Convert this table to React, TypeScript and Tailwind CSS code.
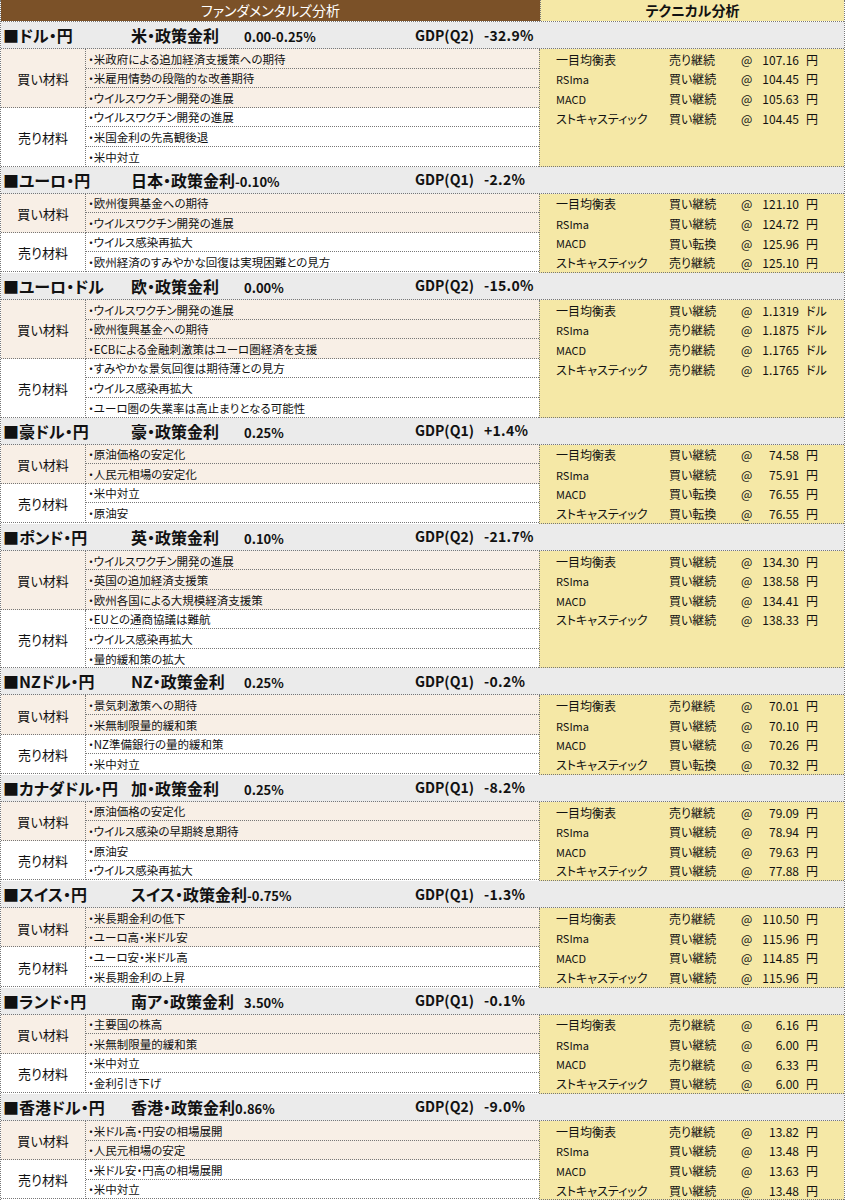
type Tech = { name: string; signal: string; value: string };

type Pair = {
  title: string;
  policy: string;
  rate: string;
  tight?: boolean;
  gdpLabel: string;
  gdp: string;
  buy: string[];
  sell: string[];
  unit: string;
  tech: Tech[];
};

const t = (a: string, b: string, c: string, d: string, sa: string, sb: string, sc: string, sd: string): Tech[] => [
  { name: '一目均衡表', signal: sa, value: a },
  { name: 'RSIma', signal: sb, value: b },
  { name: 'MACD', signal: sc, value: c },
  { name: 'ストキャスティック', signal: sd, value: d },
];

const pairs: Pair[] = [
  {
    title: '■ドル・円',
    policy: '米・政策金利',
    rate: '0.00-0.25%',
    gdpLabel: 'GDP(Q2)',
    gdp: '-32.9%',
    buy: ['・米政府による追加経済支援策への期待', '・米雇用情勢の段階的な改善期待', '・ウイルスワクチン開発の進展'],
    sell: ['・ウイルスワクチン開発の進展', '・米国金利の先高観後退', '・米中対立'],
    unit: '円',
    tech: t('107.16', '104.45', '105.63', '104.45', '売り継続', '買い継続', '買い継続', '買い継続'),
  },
  {
    title: '■ユーロ・円',
    policy: '日本・政策金利',
    rate: '-0.10%',
    tight: true,
    gdpLabel: 'GDP(Q1)',
    gdp: '-2.2%',
    buy: ['・欧州復興基金への期待', '・ウイルスワクチン開発の進展'],
    sell: ['・ウイルス感染再拡大', '・欧州経済のすみやかな回復は実現困難との見方'],
    unit: '円',
    tech: t('121.10', '124.72', '125.96', '125.10', '買い継続', '買い継続', '買い転換', '売り継続'),
  },
  {
    title: '■ユーロ・ドル',
    policy: '欧・政策金利',
    rate: '0.00%',
    gdpLabel: 'GDP(Q2)',
    gdp: '-15.0%',
    buy: ['・ウイルスワクチン開発の進展', '・欧州復興基金への期待', '・ECBによる金融刺激策はユーロ圏経済を支援'],
    sell: ['・すみやかな景気回復は期待薄との見方', '・ウイルス感染再拡大', '・ユーロ圏の失業率は高止まりとなる可能性'],
    unit: 'ドル',
    tech: t('1.1319', '1.1875', '1.1765', '1.1765', '買い継続', '売り継続', '売り継続', '売り継続'),
  },
  {
    title: '■豪ドル・円',
    policy: '豪・政策金利',
    rate: '0.25%',
    gdpLabel: 'GDP(Q1)',
    gdp: '+1.4%',
    buy: ['・原油価格の安定化', '・人民元相場の安定化'],
    sell: ['・米中対立', '・原油安'],
    unit: '円',
    tech: t('74.58', '75.91', '76.55', '76.55', '買い継続', '買い継続', '買い転換', '買い転換'),
  },
  {
    title: '■ポンド・円',
    policy: '英・政策金利',
    rate: '0.10%',
    gdpLabel: 'GDP(Q2)',
    gdp: '-21.7%',
    buy: ['・ウイルスワクチン開発の進展', '・英国の追加経済支援策', '・欧州各国による大規模経済支援策'],
    sell: ['・EUとの通商協議は難航', '・ウイルス感染再拡大', '・量的緩和策の拡大'],
    unit: '円',
    tech: t('134.30', '138.58', '134.41', '138.33', '買い継続', '買い継続', '買い継続', '買い継続'),
  },
  {
    title: '■NZドル・円',
    policy: 'NZ・政策金利',
    rate: '0.25%',
    gdpLabel: 'GDP(Q1)',
    gdp: '-0.2%',
    buy: ['・景気刺激策への期待', '・米無制限量的緩和策'],
    sell: ['・NZ準備銀行の量的緩和策', '・米中対立'],
    unit: '円',
    tech: t('70.01', '70.10', '70.26', '70.32', '売り継続', '買い継続', '買い継続', '買い転換'),
  },
  {
    title: '■カナダドル・円',
    policy: '加・政策金利',
    rate: '0.25%',
    gdpLabel: 'GDP(Q1)',
    gdp: '-8.2%',
    buy: ['・原油価格の安定化', '・ウイルス感染の早期終息期待'],
    sell: ['・原油安', '・ウイルス感染再拡大'],
    unit: '円',
    tech: t('79.09', '78.94', '79.63', '77.88', '売り継続', '買い継続', '買い継続', '買い継続'),
  },
  {
    title: '■スイス・円',
    policy: 'スイス・政策金利',
    rate: '-0.75%',
    tight: true,
    gdpLabel: 'GDP(Q1)',
    gdp: '-1.3%',
    buy: ['・米長期金利の低下', '・ユーロ高・米ドル安'],
    sell: ['・ユーロ安・米ドル高', '・米長期金利の上昇'],
    unit: '円',
    tech: t('110.50', '115.96', '114.85', '115.96', '売り継続', '買い継続', '買い継続', '買い継続'),
  },
  {
    title: '■ランド・円',
    policy: '南ア・政策金利',
    rate: '3.50%',
    gdpLabel: 'GDP(Q1)',
    gdp: '-0.1%',
    buy: ['・主要国の株高', '・米無制限量的緩和策'],
    sell: ['・米中対立', '・金利引き下げ'],
    unit: '円',
    tech: t('6.16', '6.00', '6.33', '6.00', '売り継続', '買い継続', '売り継続', '買い継続'),
  },
  {
    title: '■香港ドル・円',
    policy: '香港・政策金利',
    rate: '0.86%',
    tight: true,
    gdpLabel: 'GDP(Q2)',
    gdp: '-9.0%',
    buy: ['・米ドル高・円安の相場展開', '・人民元相場の安定'],
    sell: ['・米ドル安・円高の相場展開', '・米中対立'],
    unit: '円',
    tech: t('13.82', '13.48', '13.63', '13.48', '売り継続', '買い継続', '買い継続', '買い継続'),
  },
];

const line = 'border-dotted border-[#777]';

function Group({ label, items, shade }: { label: string; items: string[]; shade: boolean }) {
  return (
    <div className={`flex ${shade ? 'bg-[#f8efe6]' : 'bg-white'}`}>
      <div className={`w-[85px] shrink-0 flex items-center justify-center border-r border-b ${line} text-[13px] pt-[2px]`}>
        {label}
      </div>
      <div className="flex-1 flex flex-col">
        {items.map((item, i) => (
          <div
            key={i}
            className={`h-[19.6px] flex items-center pt-[2px] pl-[2px] text-[11.5px] border-b ${line} whitespace-nowrap`}
          >
            {item}
          </div>
        ))}
      </div>
    </div>
  );
}

function Section({ p }: { p: Pair }) {
  return (
    <div>
      <div className={`h-[27px] flex items-center bg-[#ebebeb] border-b ${line} font-bold whitespace-nowrap`}>
        <div className="w-[130px] shrink-0 pl-[2px] text-[16px]">{p.title}</div>
        <div className="w-[284px] shrink-0 flex items-baseline">
          <span className={`text-[16px] ${p.tight ? '' : 'min-w-[113px]'}`}>{p.policy}</span>
          <span className="text-[13px]">{p.rate}</span>
        </div>
        <div className="text-[14px] flex items-baseline">
          <span>{p.gdpLabel}</span>
          <span className="ml-[10px] tracking-[0.3px]">{p.gdp}</span>
        </div>
      </div>
      <div className="flex">
        <div className="w-[538px] shrink-0 flex flex-col">
          <Group label="買い材料" items={p.buy} shade />
          <Group label="売り材料" items={p.sell} shade={false} />
        </div>
        <div className={`flex-1 bg-[#f5e8a6] border-l border-b ${line}`}>
          {p.tech.map((r, i) => (
            <div key={i} className="h-[19.6px] flex items-center pt-[2px] text-[12px] whitespace-nowrap">
              <div className={`w-[129px] shrink-0 pl-[16px] ${i === 1 || i === 2 ? 'text-[11px]' : ''}`}>{r.name}</div>
              <div className="w-[72px] shrink-0">{r.signal}</div>
              <div className="w-[14px] shrink-0">@</div>
              <div className="w-[44px] shrink-0 text-right">{r.value}</div>
              <div className="pl-[7px]">{p.unit}</div>
            </div>
          ))}
        </div>
      </div>
    </div>
  );
}

export default function App() {
  return (
    <div className="w-[847px] bg-white">
      <div
        className={`w-[845px] border-l border-r ${line} text-[#111] [font-feature-settings:'palt']`}
        style={{ fontFamily: '"Noto Sans CJK JP", "Noto Sans", sans-serif' }}
      >
        <div className={`h-[22px] flex border-b ${line} text-[14px]`}>
          <div className="w-[539px] shrink-0 bg-[#7b5128] text-white flex items-center justify-center">
            ファンダメンタルズ分析
          </div>
          <div className={`flex-1 bg-[#f5e8a6] font-bold flex items-center justify-center border-l ${line}`}>
            テクニカル分析
          </div>
        </div>
        {pairs.map((p, i) => (
          <Section key={i} p={p} />
        ))}
      </div>
    </div>
  );
}
